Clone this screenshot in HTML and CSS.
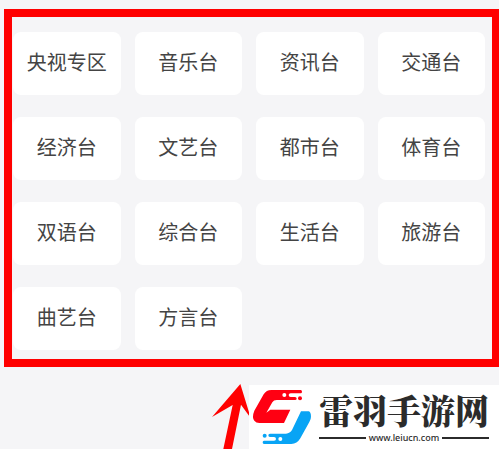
FILE: index.html
```
<!DOCTYPE html>
<html lang="zh-CN">
<head>
  <meta charset="UTF-8" />
  <meta name="viewport" content="width=device-width, initial-scale=1.0" />
  <title>电台分类</title>
  <link rel="stylesheet" href="styles.css">
</head>
<body>
  <main class="frame">
    <div class="channel-grid">
      <button type="button" class="channel">央视专区</button>
      <button type="button" class="channel">音乐台</button>
      <button type="button" class="channel">资讯台</button>
      <button type="button" class="channel">交通台</button>
      <button type="button" class="channel">经济台</button>
      <button type="button" class="channel">文艺台</button>
      <button type="button" class="channel">都市台</button>
      <button type="button" class="channel">体育台</button>
      <button type="button" class="channel">双语台</button>
      <button type="button" class="channel">综合台</button>
      <button type="button" class="channel">生活台</button>
      <button type="button" class="channel">旅游台</button>
      <button type="button" class="channel">曲艺台</button>
      <button type="button" class="channel">方言台</button>
    </div>
  </main>
  <footer class="footer">
    <svg class="arrow" viewBox="36 42 111 195" aria-hidden="true">
      <path d="M121 42 L36 141 L98 105 L70 237 L96 237 L123 104 L153 146 Z" fill="#ff0000" />
    </svg>
    <div class="brand">
      <svg class="logo" viewBox="147 45 198 192" aria-hidden="true">
        <path d="M302 60 H214 Q199 60 191 73 L163 122 Q155 142 163 152 Q168 159 178 159 H252 L271 119 H211 L199 128 L217 97 Q221 90 230 90 H285 Q290 90 290 85.500 Q290 81 285 81 H272 Q266 81 266 75 Q266 70 272 70 H302 Q306 70 306 65 Q306 60 302 60 Z" fill="#ff0012" />
        <path d="M303 124 H326 Q333 126 333 140 Q333 148 328 156 L301 205 Q291 222 274 222 H192 Q188 222 188 217 Q188 212 192 212 H222 Q228 212 228 207 Q228 201 222 201 H210 Q205 201 205 196 Q205 191 210 191 H258 Q270 190 276 180 Z" fill="#08a4f5" />
        <circle cx="300" cy="85" r="6" fill="#ff0012" />
        <circle cx="194" cy="197" r="6" fill="#08a4f5" />
        <g fill="#fff">
          <circle cx="253" cy="75" r="6" />
          <circle cx="241" cy="207" r="6" />
        </g>
      </svg>
      <div class="brand-text">
        <div class="brand-name">雷羽手游网</div>
        <div class="brand-url">www.leiucn.com</div>
      </div>
    </div>
  </footer>
</body>
</html>
```
FILE: styles.css
```
* { box-sizing: border-box; }
body {
  margin: 0;
  font-family: "Noto Sans CJK SC", sans-serif;
  background: #f5f5f7;
  overflow: hidden;
}
.frame {
  margin: 9px 0 0 4px;
  padding: 15px 7px 9px 1px;
  border: 8px solid #ff0000;
  border-right-width: 7px;
}
.channel-grid {
  display: grid;
  grid-template-columns: repeat(4, 1fr);
  gap: 22px 14px;
}
.channel {
  height: 63px;
  padding: 0 0 3px;
  border: none;
  border-radius: 8px;
  background: #fff;
  color: #444;
  font-family: inherit;
  font-size: 20px;
  line-height: 30px;
  cursor: pointer;
}
.footer {
  display: flex;
  justify-content: flex-end;
  margin-top: 17px;
}
.arrow { width: 37px; height: 65px; }
.brand {
  display: flex;
  width: 250px;
  height: 64px;
  margin-top: 1px;
  background: #fff;
}
.logo { width: 66px; height: 64px; }
.brand-text { flex: 1; padding: 6px 10px 0 4px; color: #2b2b2b; }
.brand-name {
  font-family: "Noto Serif CJK SC", "Noto Sans CJK SC", serif;
  font-size: 34px;
  font-weight: 900;
  line-height: 38px;
  white-space: nowrap;
}
.brand-url {
  display: flex;
  align-items: center;
  gap: 3px;
  font-family: "Noto Sans", sans-serif;
  font-size: 9px;
  font-weight: 500;
  line-height: 18px;
}
.brand-url::before, .brand-url::after {
  content: "";
  flex: 1;
  height: 2px;
  background: #2b2b2b;
}
```
